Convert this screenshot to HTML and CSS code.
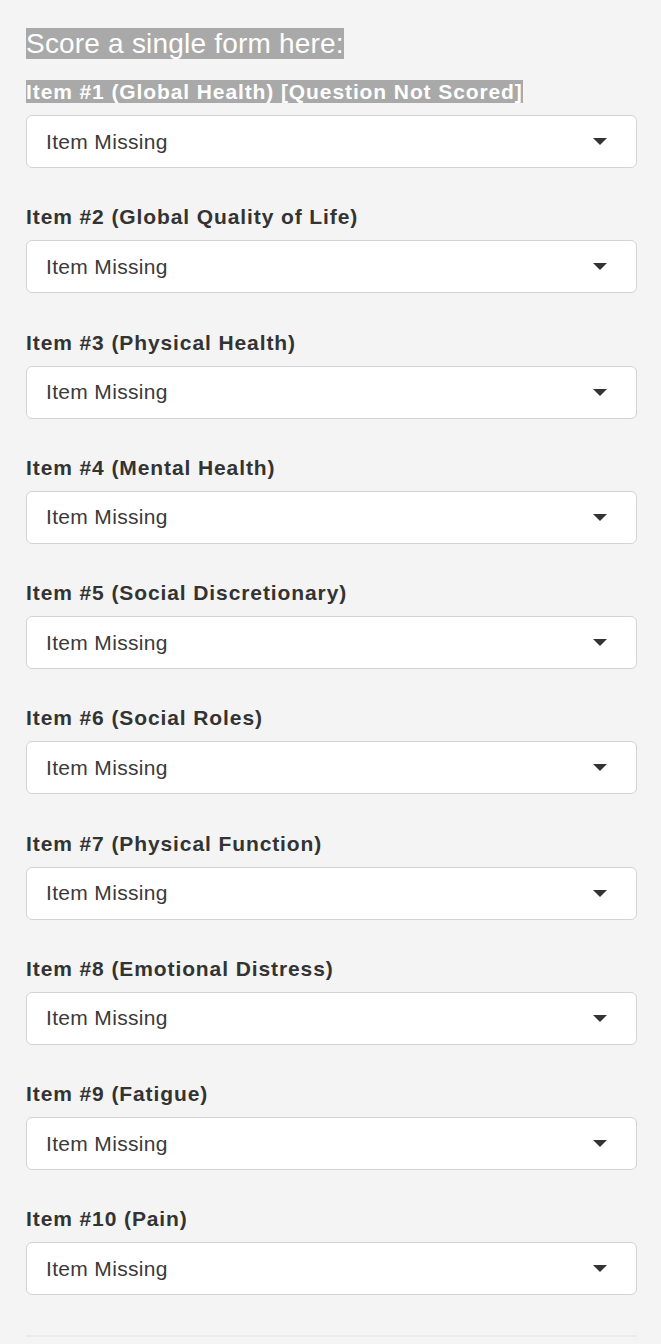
FILE: index.html
```html
<!DOCTYPE html>
<html>
<head>
<meta charset="utf-8">
<link rel="stylesheet" href="styles.css">
</head>
<body>
<div class="panel">
  <h3 class="title"><span class="sel">Score a single form here:</span></h3>
  <div class="group">
    <label class="label"><span class="sel">Item #1 (Global Health) [Question Not Scored]</span></label>
    <div class="select"><span>Item Missing</span><i class="caret"></i></div>
  </div>
  <div class="group">
    <label class="label">Item #2 (Global Quality of Life)</label>
    <div class="select"><span>Item Missing</span><i class="caret"></i></div>
  </div>
  <div class="group">
    <label class="label">Item #3 (Physical Health)</label>
    <div class="select"><span>Item Missing</span><i class="caret"></i></div>
  </div>
  <div class="group">
    <label class="label">Item #4 (Mental Health)</label>
    <div class="select"><span>Item Missing</span><i class="caret"></i></div>
  </div>
  <div class="group">
    <label class="label">Item #5 (Social Discretionary)</label>
    <div class="select"><span>Item Missing</span><i class="caret"></i></div>
  </div>
  <div class="group">
    <label class="label">Item #6 (Social Roles)</label>
    <div class="select"><span>Item Missing</span><i class="caret"></i></div>
  </div>
  <div class="group">
    <label class="label">Item #7 (Physical Function)</label>
    <div class="select"><span>Item Missing</span><i class="caret"></i></div>
  </div>
  <div class="group">
    <label class="label">Item #8 (Emotional Distress)</label>
    <div class="select"><span>Item Missing</span><i class="caret"></i></div>
  </div>
  <div class="group">
    <label class="label">Item #9 (Fatigue)</label>
    <div class="select"><span>Item Missing</span><i class="caret"></i></div>
  </div>
  <div class="group">
    <label class="label">Item #10 (Pain)</label>
    <div class="select"><span>Item Missing</span><i class="caret"></i></div>
  </div>
  <hr class="rule">
</div>
</body>
</html>
```
FILE: styles.css
```css
html, body {
  margin: 0;
  padding: 0;
  background: #f4f4f4;
}
body {
  font-family: "Liberation Sans", Arial, sans-serif;
  color: #333;
}
.panel {
  padding: 28px 24px 0 26px;
}
.title {
  margin: 0 0 17px 0;
  font-size: 28px;
  font-weight: normal;
  line-height: 32px;
  letter-spacing: 0.2px;
}
.sel {
  background: #a9a9a9;
  color: #fff;
}
.group {
  margin-bottom: 34.25px;
}
.label {
  display: block;
  font-size: 21px;
  font-weight: bold;
  line-height: 30px;
  margin-bottom: 8px;
  letter-spacing: 0.9px;
  color: #333;
}
.select {
  box-sizing: border-box;
  height: 53px;
  background: #fff;
  border: 1px solid #d3d3d3;
  border-radius: 6px;
  display: flex;
  align-items: center;
  justify-content: space-between;
  padding: 0 29px 0 19px;
  font-size: 21px;
  letter-spacing: 0.33px;
  color: #3a3a3a;
}
.caret {
  width: 0;
  height: 0;
  border-left: 7px solid transparent;
  border-right: 7px solid transparent;
  border-top: 7px solid #333;
}
.rule {
  margin: 40px 0 0 0;
  border: 0;
  border-top: 2px solid #ebebeb;
}
```
